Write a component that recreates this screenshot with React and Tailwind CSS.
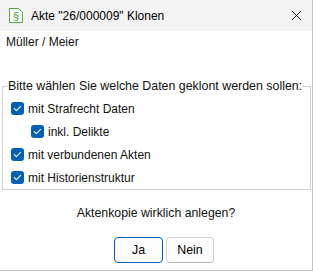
import React from "react";

function Check() {
  return (
    <span className="w-[13px] h-[13px] rounded-[3px] bg-[#005fb8] flex items-center justify-center shrink-0">
      <svg width="13" height="13" viewBox="0 0 13 13">
        <path d="M3.3 6.7 L5.4 8.7 L9.6 4.4" fill="none" stroke="#ffffff" strokeWidth="1.1" strokeLinecap="round" strokeLinejoin="round" />
      </svg>
    </span>
  );
}

function Row({ label, pl }) {
  return (
    <div className={`h-[23px] flex items-center gap-[4px] ${pl}`}>
      <Check />
      <span className="leading-[14px]">{label}</span>
    </div>
  );
}

export default function App() {
  return (
    <div className="w-[313px] h-[271px] bg-white border-r border-b border-[#c4c4c4] font-['Liberation_Sans',Arial,sans-serif] text-[12px] text-[#111] flex flex-col">
      <div className="h-[31px] bg-[#f3f3f3] flex items-center pl-[8px] shrink-0">
        <svg width="16" height="17" viewBox="0 0 16 17" className="shrink-0">
          <path d="M1.5 1.5 H10.5 L14.5 5.5 V15.5 H1.5 Z" fill="#ffffff" stroke="#4caf3f" strokeWidth="1" />
          <text x="8" y="13" textAnchor="middle" fontSize="11.5" fill="#3f9f35" fontFamily="Liberation Sans, Arial, sans-serif">§</text>
        </svg>
        <span className="ml-[7px] leading-[14px] text-black">Akte "26/000009" Klonen</span>
        <svg width="11" height="11" viewBox="0 0 11 11" className="ml-auto mr-[10px]">
          <path d="M1 1 L10 10 M10 1 L1 10" stroke="#222" strokeWidth="1" />
        </svg>
      </div>
      <div className="pl-[6px] pt-[4px] leading-[14px]">Müller / Meier</div>
      <fieldset className="mt-[30px] ml-[2px] w-[309px] border border-[#d0d0d0] pt-[4px]">
        <legend className="ml-[5px] px-0 leading-[14px] text-[12.4px]">Bitte wählen Sie welche Daten geklont werden sollen:</legend>
        <Row label="mit Strafrecht Daten" pl="pl-[8px]" />
        <Row label="inkl. Delikte" pl="pl-[28px]" />
        <Row label="mit verbundenen Akten" pl="pl-[8px]" />
        <Row label="mit Historienstruktur" pl="pl-[8px]" />
      </fieldset>
      <div className="mt-[16px] text-center leading-[14px] text-[12.3px]">Aktenkopie wirklich anlegen?</div>
      <div className="mt-[17px] pl-[114px] flex gap-[3px]">
        <button className="w-[49px] h-[26px] rounded-[4px] border border-[#005fb8] bg-[#fdfdfd] text-[12.4px] leading-[14px] text-black">Ja</button>
        <button className="w-[48px] h-[26px] rounded-[4px] border border-[#d0d0d0] border-b-[#b8b8b8] bg-[#fdfdfd] text-[12.4px] leading-[14px] text-black">Nein</button>
      </div>
    </div>
  );
}
